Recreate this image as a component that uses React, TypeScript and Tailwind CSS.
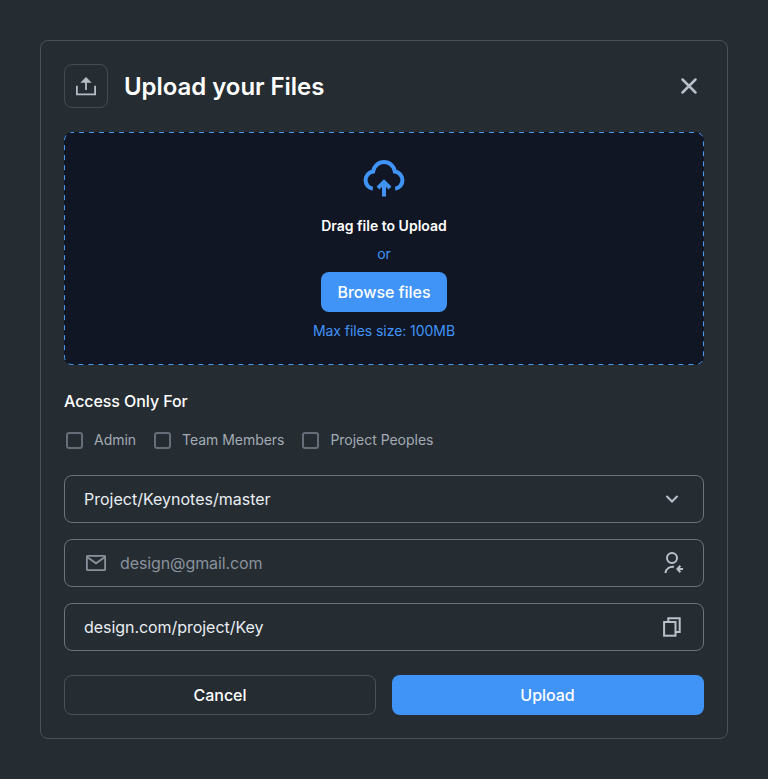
import { useState } from "react";
import type { ReactNode } from "react";

function UploadIcon() {
  return (
    <svg width="24" height="24" viewBox="0 0 24 24" fill="none">
      <path d="M2.9 11.8v8.5h18.2v-8.5" stroke="#b5bcc6" strokeWidth="1.8" />
      <path d="M12 16V7" stroke="#b5bcc6" strokeWidth="1.8" />
      <path d="M12 3l5.7 5.7H6.3z" fill="#b5bcc6" />
    </svg>
  );
}

function CloseIcon() {
  return (
    <svg width="30" height="30" viewBox="0 0 30 30" fill="none">
      <path d="M8.5 8.5l13 13M21.5 8.5l-13 13" stroke="#b9c0ca" strokeWidth="2.5" strokeLinecap="round" />
    </svg>
  );
}

function CloudUploadIcon() {
  return (
    <svg width="48" height="48" viewBox="0 0 48 48" fill="none" stroke="#4094f7" strokeWidth="4">
      <path d="M12.8 34.8A8.75 8.75 0 0 1 13.2 17.5A10.9 10.9 0 0 1 34.8 17.5A8.75 8.75 0 0 1 35.2 34.8" />
      <path d="M24 42.5V27" />
      <path d="M18 34l6-5.9 6 5.9" />
    </svg>
  );
}

function ChevronIcon() {
  return (
    <svg width="24" height="24" viewBox="0 0 24 24" fill="none">
      <path d="M7 9.5l5 5 5-5" stroke="#b9c0ca" strokeWidth="2" strokeLinecap="round" />
    </svg>
  );
}

function MailIcon() {
  return (
    <svg width="24" height="24" viewBox="0 0 24 24" fill="none" stroke="#89929b" strokeWidth="1.8">
      <rect x="2.9" y="4.9" width="18.2" height="14.2" rx="0.6" />
      <path d="M3 6l9 6.3L21 6" />
    </svg>
  );
}

function InviteIcon() {
  return (
    <svg width="24" height="24" viewBox="0 0 24 24" fill="none" stroke="#b9c0ca" strokeWidth="2">
      <circle cx="12" cy="6.9" r="5" />
      <path d="M5.4 22a7.3 7.3 0 0 1 8.6-6.2" />
      <path d="M23 18h-5.2M20.4 14.8L17.4 18l3 3.2" />
    </svg>
  );
}

function CopyIcon() {
  return (
    <svg width="24" height="24" viewBox="0 0 24 24" fill="none" stroke="#b9c0ca" strokeWidth="2">
      <rect x="4.1" y="7" width="11.4" height="13.7" />
      <path d="M8.3 7V3.3h11.4V17h-4" />
    </svg>
  );
}

function Access({ label }: { label: string }) {
  const [checked, setChecked] = useState(false);
  return (
    <button
      type="button"
      role="checkbox"
      aria-checked={checked}
      onClick={() => setChecked(!checked)}
      className="flex items-center gap-[11px] text-[14px] leading-5 tracking-[-0.03px] whitespace-nowrap text-[#a3abb5]"
    >
      <span className={`size-[17px] rounded-[3px] border-2 border-[#666e77] ${checked ? "bg-[#4094f7]" : ""}`} />
      {label}
    </button>
  );
}

function Field({ children }: { children: ReactNode }) {
  return (
    <div className="flex h-12 items-center justify-between rounded-lg border border-[#6b747b] px-[19px] text-[16px] text-[#e9eef2]">
      {children}
    </div>
  );
}

export default function App() {
  return (
    <main className="h-[779px] w-[768px] bg-[#252c32] p-10 font-['Inter','Liberation_Sans',sans-serif]">
      <section className="flex h-[699px] flex-col rounded-lg border border-[#48525a] px-[23px] pt-[23px]">
        <header className="flex h-11 items-center">
          <div className="flex size-11 items-center justify-center rounded-lg border border-[#434b52]">
            <UploadIcon />
          </div>
          <h1 className="ml-4 flex-1 pt-0.5 text-[24px] leading-8 font-semibold tracking-[-0.05px] text-white">Upload your Files</h1>
          <button type="button" aria-label="Close">
            <CloseIcon />
          </button>
        </header>

        <div className="relative mt-6 flex h-[233px] flex-col items-center rounded-lg bg-[#101624] pt-[22px]">
          <svg className="absolute inset-0" width="640" height="233" fill="none">
            <rect x="0.5" y="0.5" width="639" height="232" rx="7.5" stroke="#4a98ec" strokeDasharray="5 5" strokeDashoffset="3" />
          </svg>
          <CloudUploadIcon />
          <p className="mt-3.5 text-[14px] leading-5 font-semibold text-white">Drag file to Upload</p>
          <p className="mt-2 text-[14px] leading-5 text-[#4094f7]">or</p>
          <button type="button" className="mt-2 h-10 w-[126px] rounded-lg bg-[#4094f7] text-[16px] font-medium tracking-[-0.05px] text-white">
            Browse files
          </button>
          <p className="mt-[9px] text-[14px] leading-5 tracking-[-0.05px] text-[#4094f7]">Max files size: 100MB</p>
        </div>

        <h2 className="mt-6 text-[16px] leading-6 font-medium tracking-[-0.07px] text-white">Access Only For</h2>
        <div className="mt-[17px] flex h-5 items-center gap-[18px] pl-0.5">
          <Access label="Admin" />
          <Access label="Team Members" />
          <Access label="Project Peoples" />
        </div>

        <div className="mt-[25px] flex flex-col gap-4">
          <Field>
            <span>Project/Keynotes/master</span>
            <ChevronIcon />
          </Field>
          <Field>
            <span className="flex items-center gap-3 tracking-[-0.1px] text-[#89929b]">
              <MailIcon />
              design@gmail.com
            </span>
            <InviteIcon />
          </Field>
          <Field>
            <span className="tracking-[-0.05px]">design.com/project/Key</span>
            <CopyIcon />
          </Field>
        </div>

        <footer className="mt-6 grid grid-cols-2 gap-4 text-[16px] font-medium text-white">
          <button type="button" className="h-10 rounded-lg border border-[#48525a]">Cancel</button>
          <button type="button" className="h-10 rounded-lg bg-[#4094f7] pr-px tracking-[-0.05px]">Upload</button>
        </footer>
      </section>
    </main>
  );
}
